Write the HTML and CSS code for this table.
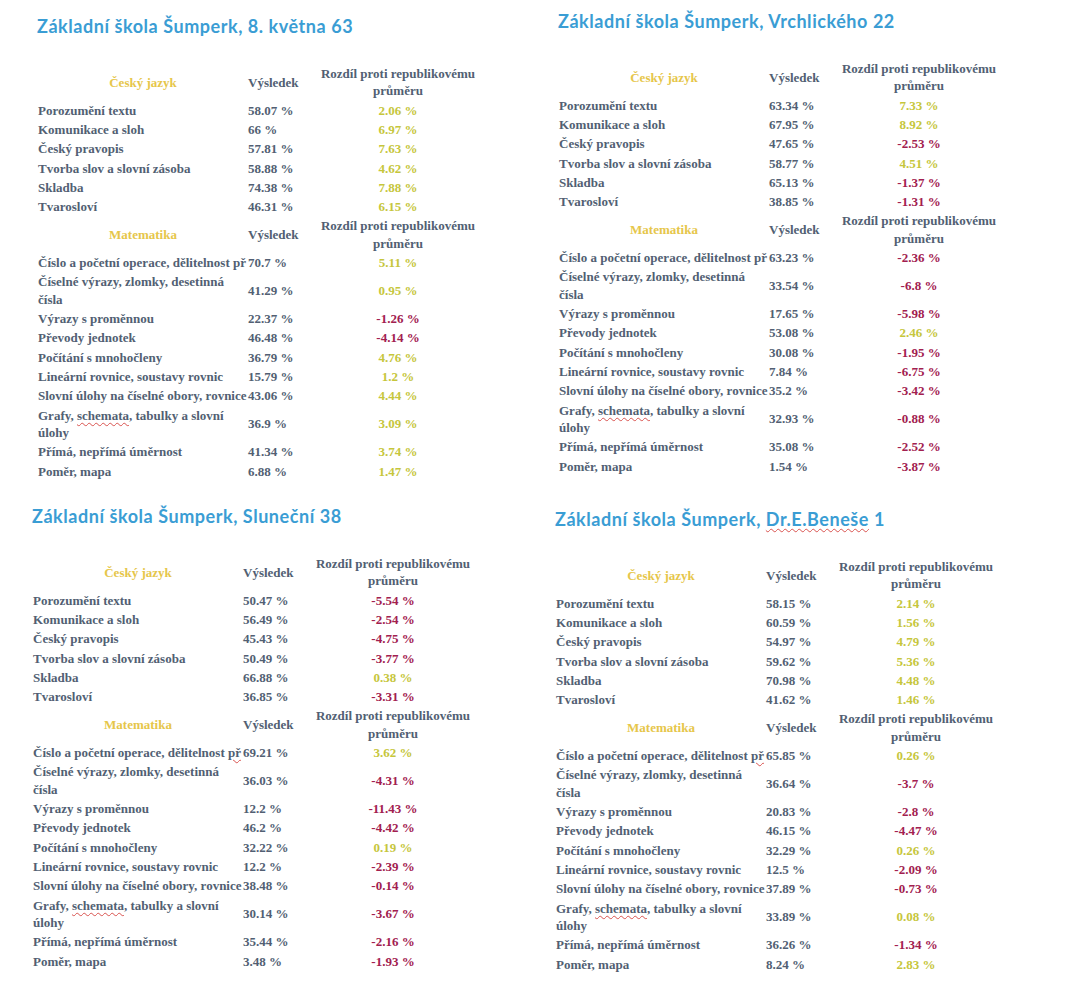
FILE: index.html
```html
<!DOCTYPE html>
<html lang="cs">
<head>
<meta charset="utf-8">
<title>Výsledky škol Šumperk</title>
<link rel="stylesheet" href="styles.css">
</head>
<body>
<main class="page">

<section class="panel panel--a">
<h2 class="title">Základní škola Šumperk, 8. května 63</h2>
<table class="res">
<colgroup><col class="c-label"><col class="c-val"><col class="c-diff"></colgroup>
<tbody>
<tr class="head"><td class="subj">Český jazyk</td><td>Výsledek</td><td class="dh">Rozdíl proti republikovému<br>průměru</td></tr>
<tr><td>Porozumění textu</td><td>58.07 %</td><td class="pos">2.06 %</td></tr>
<tr><td>Komunikace a sloh</td><td>66 %</td><td class="pos">6.97 %</td></tr>
<tr><td>Český pravopis</td><td>57.81 %</td><td class="pos">7.63 %</td></tr>
<tr><td>Tvorba slov a slovní zásoba</td><td>58.88 %</td><td class="pos">4.62 %</td></tr>
<tr><td>Skladba</td><td>74.38 %</td><td class="pos">7.88 %</td></tr>
<tr><td>Tvarosloví</td><td>46.31 %</td><td class="pos">6.15 %</td></tr>
<tr class="head"><td class="subj">Matematika</td><td>Výsledek</td><td class="dh">Rozdíl proti republikovému<br>průměru</td></tr>
<tr><td>Číslo a početní operace, dělitelnost př</td><td>70.7 %</td><td class="pos">5.11 %</td></tr>
<tr><td>Číselné výrazy, zlomky, desetinná<br>čísla</td><td>41.29 %</td><td class="pos">0.95 %</td></tr>
<tr><td>Výrazy s proměnnou</td><td>22.37 %</td><td class="neg">-1.26 %</td></tr>
<tr><td>Převody jednotek</td><td>46.48 %</td><td class="neg">-4.14 %</td></tr>
<tr><td>Počítání s mnohočleny</td><td>36.79 %</td><td class="pos">4.76 %</td></tr>
<tr><td>Lineární rovnice, soustavy rovnic</td><td>15.79 %</td><td class="pos">1.2 %</td></tr>
<tr><td>Slovní úlohy na číselné obory, rovnice</td><td>43.06 %</td><td class="pos">4.44 %</td></tr>
<tr><td>Grafy, <span class="typo">schemata</span>, tabulky a slovní<br>úlohy</td><td>36.9 %</td><td class="pos">3.09 %</td></tr>
<tr><td>Přímá, nepřímá úměrnost</td><td>41.34 %</td><td class="pos">3.74 %</td></tr>
<tr><td>Poměr, mapa</td><td>6.88 %</td><td class="pos">1.47 %</td></tr>
</tbody>
</table>
</section>

<section class="panel panel--b">
<h2 class="title">Základní škola Šumperk, Vrchlického 22</h2>
<table class="res">
<colgroup><col class="c-label"><col class="c-val"><col class="c-diff"></colgroup>
<tbody>
<tr class="head"><td class="subj">Český jazyk</td><td>Výsledek</td><td class="dh">Rozdíl proti republikovému<br>průměru</td></tr>
<tr><td>Porozumění textu</td><td>63.34 %</td><td class="pos">7.33 %</td></tr>
<tr><td>Komunikace a sloh</td><td>67.95 %</td><td class="pos">8.92 %</td></tr>
<tr><td>Český pravopis</td><td>47.65 %</td><td class="neg">-2.53 %</td></tr>
<tr><td>Tvorba slov a slovní zásoba</td><td>58.77 %</td><td class="pos">4.51 %</td></tr>
<tr><td>Skladba</td><td>65.13 %</td><td class="neg">-1.37 %</td></tr>
<tr><td>Tvarosloví</td><td>38.85 %</td><td class="neg">-1.31 %</td></tr>
<tr class="head"><td class="subj">Matematika</td><td>Výsledek</td><td class="dh">Rozdíl proti republikovému<br>průměru</td></tr>
<tr><td>Číslo a početní operace, dělitelnost př</td><td>63.23 %</td><td class="neg">-2.36 %</td></tr>
<tr><td>Číselné výrazy, zlomky, desetinná<br>čísla</td><td>33.54 %</td><td class="neg">-6.8 %</td></tr>
<tr><td>Výrazy s proměnnou</td><td>17.65 %</td><td class="neg">-5.98 %</td></tr>
<tr><td>Převody jednotek</td><td>53.08 %</td><td class="pos">2.46 %</td></tr>
<tr><td>Počítání s mnohočleny</td><td>30.08 %</td><td class="neg">-1.95 %</td></tr>
<tr><td>Lineární rovnice, soustavy rovnic</td><td>7.84 %</td><td class="neg">-6.75 %</td></tr>
<tr><td>Slovní úlohy na číselné obory, rovnice</td><td>35.2 %</td><td class="neg">-3.42 %</td></tr>
<tr><td>Grafy, <span class="typo">schemata</span>, tabulky a slovní<br>úlohy</td><td>32.93 %</td><td class="neg">-0.88 %</td></tr>
<tr><td>Přímá, nepřímá úměrnost</td><td>35.08 %</td><td class="neg">-2.52 %</td></tr>
<tr><td>Poměr, mapa</td><td>1.54 %</td><td class="neg">-3.87 %</td></tr>
</tbody>
</table>
</section>

<section class="panel panel--c">
<h2 class="title">Základní škola Šumperk, Sluneční 38</h2>
<table class="res">
<colgroup><col class="c-label"><col class="c-val"><col class="c-diff"></colgroup>
<tbody>
<tr class="head"><td class="subj">Český jazyk</td><td>Výsledek</td><td class="dh">Rozdíl proti republikovému<br>průměru</td></tr>
<tr><td>Porozumění textu</td><td>50.47 %</td><td class="neg">-5.54 %</td></tr>
<tr><td>Komunikace a sloh</td><td>56.49 %</td><td class="neg">-2.54 %</td></tr>
<tr><td>Český pravopis</td><td>45.43 %</td><td class="neg">-4.75 %</td></tr>
<tr><td>Tvorba slov a slovní zásoba</td><td>50.49 %</td><td class="neg">-3.77 %</td></tr>
<tr><td>Skladba</td><td>66.88 %</td><td class="pos">0.38 %</td></tr>
<tr><td>Tvarosloví</td><td>36.85 %</td><td class="neg">-3.31 %</td></tr>
<tr class="head"><td class="subj">Matematika</td><td>Výsledek</td><td class="dh">Rozdíl proti republikovému<br>průměru</td></tr>
<tr><td>Číslo a početní operace, dělitelnost <span class="typo">př</span></td><td>69.21 %</td><td class="pos">3.62 %</td></tr>
<tr><td>Číselné výrazy, zlomky, desetinná<br>čísla</td><td>36.03 %</td><td class="neg">-4.31 %</td></tr>
<tr><td>Výrazy s proměnnou</td><td>12.2 %</td><td class="neg">-11.43 %</td></tr>
<tr><td>Převody jednotek</td><td>46.2 %</td><td class="neg">-4.42 %</td></tr>
<tr><td>Počítání s mnohočleny</td><td>32.22 %</td><td class="pos">0.19 %</td></tr>
<tr><td>Lineární rovnice, soustavy rovnic</td><td>12.2 %</td><td class="neg">-2.39 %</td></tr>
<tr><td>Slovní úlohy na číselné obory, rovnice</td><td>38.48 %</td><td class="neg">-0.14 %</td></tr>
<tr><td>Grafy, <span class="typo">schemata</span>, tabulky a slovní<br>úlohy</td><td>30.14 %</td><td class="neg">-3.67 %</td></tr>
<tr><td>Přímá, nepřímá úměrnost</td><td>35.44 %</td><td class="neg">-2.16 %</td></tr>
<tr><td>Poměr, mapa</td><td>3.48 %</td><td class="neg">-1.93 %</td></tr>
</tbody>
</table>
</section>

<section class="panel panel--d">
<h2 class="title">Základní škola Šumperk, <span class="typo">Dr.E.Beneše</span> 1</h2>
<table class="res">
<colgroup><col class="c-label"><col class="c-val"><col class="c-diff"></colgroup>
<tbody>
<tr class="head"><td class="subj">Český jazyk</td><td>Výsledek</td><td class="dh">Rozdíl proti republikovému<br>průměru</td></tr>
<tr><td>Porozumění textu</td><td>58.15 %</td><td class="pos">2.14 %</td></tr>
<tr><td>Komunikace a sloh</td><td>60.59 %</td><td class="pos">1.56 %</td></tr>
<tr><td>Český pravopis</td><td>54.97 %</td><td class="pos">4.79 %</td></tr>
<tr><td>Tvorba slov a slovní zásoba</td><td>59.62 %</td><td class="pos">5.36 %</td></tr>
<tr><td>Skladba</td><td>70.98 %</td><td class="pos">4.48 %</td></tr>
<tr><td>Tvarosloví</td><td>41.62 %</td><td class="pos">1.46 %</td></tr>
<tr class="head"><td class="subj">Matematika</td><td>Výsledek</td><td class="dh">Rozdíl proti republikovému<br>průměru</td></tr>
<tr><td>Číslo a početní operace, dělitelnost <span class="typo">př</span></td><td>65.85 %</td><td class="pos">0.26 %</td></tr>
<tr><td>Číselné výrazy, zlomky, desetinná<br>čísla</td><td>36.64 %</td><td class="neg">-3.7 %</td></tr>
<tr><td>Výrazy s proměnnou</td><td>20.83 %</td><td class="neg">-2.8 %</td></tr>
<tr><td>Převody jednotek</td><td>46.15 %</td><td class="neg">-4.47 %</td></tr>
<tr><td>Počítání s mnohočleny</td><td>32.29 %</td><td class="pos">0.26 %</td></tr>
<tr><td>Lineární rovnice, soustavy rovnic</td><td>12.5 %</td><td class="neg">-2.09 %</td></tr>
<tr><td>Slovní úlohy na číselné obory, rovnice</td><td>37.89 %</td><td class="neg">-0.73 %</td></tr>
<tr><td>Grafy, <span class="typo">schemata</span>, tabulky a slovní<br>úlohy</td><td>33.89 %</td><td class="pos">0.08 %</td></tr>
<tr><td>Přímá, nepřímá úměrnost</td><td>36.26 %</td><td class="neg">-1.34 %</td></tr>
<tr><td>Poměr, mapa</td><td>8.24 %</td><td class="pos">2.83 %</td></tr>
</tbody>
</table>
</section>

</main>
</body>
</html>
```

FILE: styles.css
```css
html, body {
  margin: 0;
  padding: 0;
  background: #ffffff;
}

.page {
  width: 1080px;
  height: 1001px;
  display: grid;
  grid-template-columns: 540px 540px;
  grid-template-rows: 490px 511px;
  overflow: hidden;
}

.panel {
  display: flex;
  flex-direction: column;
}

.panel--a { padding: 14px 0 0 38px; }
.panel--b { padding: 9px 0 0 19px; }
.panel--c { padding: 14px 0 0 33px; }
.panel--d { padding: 17px 0 0 16px; }

.title {
  margin: 0 0 26px -1px;
  font-family: Lato, "Open Sans", sans-serif;
  font-weight: 700;
  font-size: 18px;
  line-height: 24px;
  letter-spacing: 0.55px;
  color: #3a9dd4;
  white-space: nowrap;
}

.res {
  border-collapse: collapse;
  border-spacing: 0;
  table-layout: fixed;
  width: 440px;
  font-family: "Liberation Serif", "Times New Roman", serif;
  font-weight: bold;
  font-size: 13px;
  color: #525f73;
}

.c-label { width: 210px; }
.c-val { width: 70px; }
.c-diff { width: 160px; }

.res td {
  padding: 0.9px 0;
  line-height: 17.5px;
  white-space: nowrap;
  vertical-align: middle;
  text-align: left;
}

.res td:nth-child(3) {
  text-align: center;
}

.res .subj {
  text-align: center;
  color: #e6c64a;
}

.pos { color: #c6c63c; }
.neg { color: #a2204f; }

.typo {
  text-decoration: underline wavy #d9534f;
  text-decoration-thickness: 1px;
  text-underline-offset: 2px;
}
```
